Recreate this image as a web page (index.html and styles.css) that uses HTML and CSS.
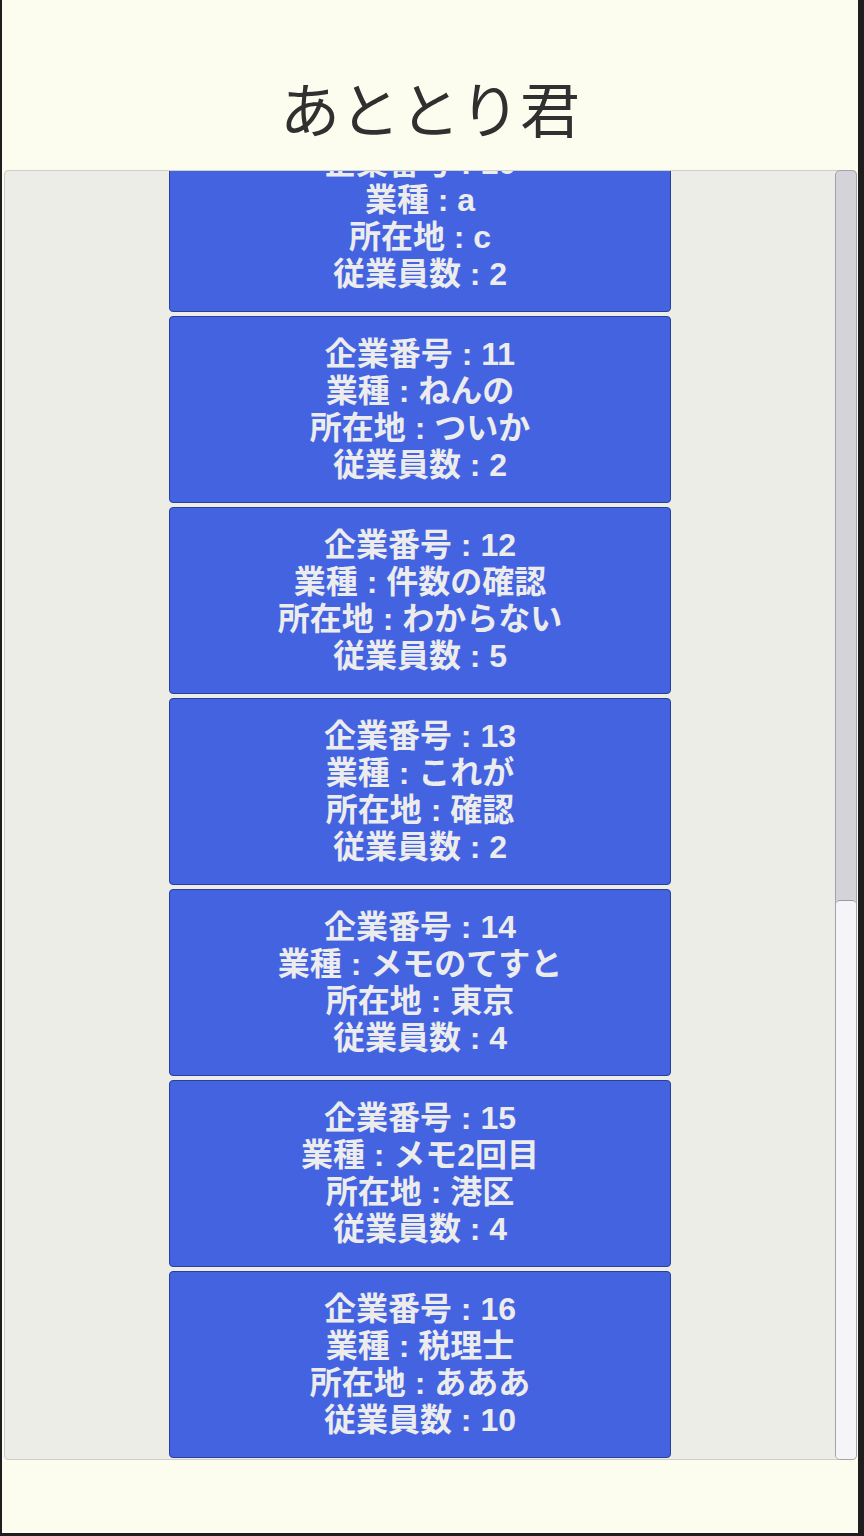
FILE: index.html
```html
<html>
<head>
<meta charset="utf-8">
<link rel="stylesheet" href="styles.css">
</head>
<body>
<div class="frame">
  <header class="top">
    <h1 class="title">あととり君</h1>
  </header>

  <div class="box">
    <div class="list" id="list">
      <div class="card"><p>企業番号 : 1</p><p>業種 : テスト</p><p>所在地 : 大阪</p><p>従業員数 : 3</p></div>
      <div class="card"><p>企業番号 : 2</p><p>業種 : 飲食</p><p>所在地 : 渋谷</p><p>従業員数 : 8</p></div>
      <div class="card"><p>企業番号 : 3</p><p>業種 : 製造</p><p>所在地 : 名古屋</p><p>従業員数 : 12</p></div>
      <div class="card"><p>企業番号 : 4</p><p>業種 : 小売</p><p>所在地 : 福岡</p><p>従業員数 : 6</p></div>
      <div class="card"><p>企業番号 : 5</p><p>業種 : 建設</p><p>所在地 : 札幌</p><p>従業員数 : 20</p></div>
      <div class="card"><p>企業番号 : 6</p><p>業種 : 農業</p><p>所在地 : 新潟</p><p>従業員数 : 4</p></div>
      <div class="card"><p>企業番号 : 7</p><p>業種 : 運送</p><p>所在地 : 横浜</p><p>従業員数 : 15</p></div>
      <div class="card"><p>企業番号 : 8</p><p>業種 : 印刷</p><p>所在地 : 京都</p><p>従業員数 : 7</p></div>
      <div class="card"><p>企業番号 : 9</p><p>業種 : b</p><p>所在地 : d</p><p>従業員数 : 1</p></div>
      <div class="card"><p>企業番号 : 10</p><p>業種 : a</p><p>所在地 : c</p><p>従業員数 : 2</p></div>
      <div class="card"><p>企業番号 : 11</p><p>業種 : ねんの</p><p>所在地 : ついか</p><p>従業員数 : 2</p></div>
      <div class="card"><p>企業番号 : 12</p><p>業種 : 件数の確認</p><p>所在地 : わからない</p><p>従業員数 : 5</p></div>
      <div class="card"><p>企業番号 : 13</p><p>業種 : これが</p><p>所在地 : 確認</p><p>従業員数 : 2</p></div>
      <div class="card"><p>企業番号 : 14</p><p>業種 : メモのてすと</p><p>所在地 : 東京</p><p>従業員数 : 4</p></div>
      <div class="card"><p>企業番号 : 15</p><p>業種 : メモ2回目</p><p>所在地 : 港区</p><p>従業員数 : 4</p></div>
      <div class="card"><p>企業番号 : 16</p><p>業種 : 税理士</p><p>所在地 : あああ</p><p>従業員数 : 10</p></div>
    </div>
    <div class="scrollbar">
      <div class="track"></div>
      <div class="thumb"></div>
    </div>
  </div>

  <footer class="bottom"></footer>
</div>
<script src="script.js"></script>
</body>
</html>
```

FILE: styles.css
```css
html, body
{
  margin: 0;
  padding: 0;
  background-color: #1e1e1e;
}

.frame
{
  box-sizing: border-box;
  height: 1536px;
  display: flex;
  flex-direction: column;
  background-color: #fdfdef;
  border-style: solid;
  border-color: #1e1e1e;
  border-width: 0 6px 3px 2px;
  font-family: "Liberation Sans", "Noto Sans CJK JP", sans-serif;
}

.top
{
  height: 170px;
  flex: none;
  display: flex;
  align-items: center;
  justify-content: center;
}

.title
{
  margin: 44px 0 0 0;
  font-family: "Noto Sans CJK JP", sans-serif;
  font-weight: normal;
  font-size: 60px;
  line-height: 80px;
  color: #303030;
}

.box
{
  height: 1290px;
  flex: none;
  box-sizing: border-box;
  margin: 0 1px 0 2px;
  display: flex;
  background-color: #ededE7;
  border: 1px solid #cfcfc8;
  border-radius: 4px;
}

.list
{
  flex: 1;
  box-sizing: border-box;
  padding: 2px 0 1px 0;
  display: flex;
  flex-direction: column;
  align-items: center;
  gap: 4px;
  overflow: hidden;
}

/* fake scrollbar, right side */
.scrollbar
{
  width: 20px;
  flex: none;
  display: flex;
  flex-direction: column;
  margin: -1px -1px -1px 0;
  border: 1px solid #a4a4a8;
  border-radius: 5px;
  overflow: hidden;
  background-color: #d3d3d9;
}

.track { flex: 1; }

.thumb
{
  height: 558px;
  flex: none;
  background-color: #f5f5f9;
  border-top: 1px solid #9a9a9e;
  border-radius: 4px 4px 0 0;
}

.card
{
  flex: none;
  box-sizing: border-box;
  width: 502px;
  height: 187px;
  padding: 19px 0 18px 0;
  background-color: #4363e0;
  border: 1px solid #2b3f9c;
  border-radius: 4px;
  text-align: center;
  color: #ececec;
  font-weight: bold;
  font-size: 32px;
  line-height: 37px;
}

.card p { margin: 0; white-space: nowrap; }

.bottom { flex: 1; }
```

FILE: script.js
```js
// show the newest entries
var list = document.getElementById('list');
list.scrollTop = list.scrollHeight;
```
